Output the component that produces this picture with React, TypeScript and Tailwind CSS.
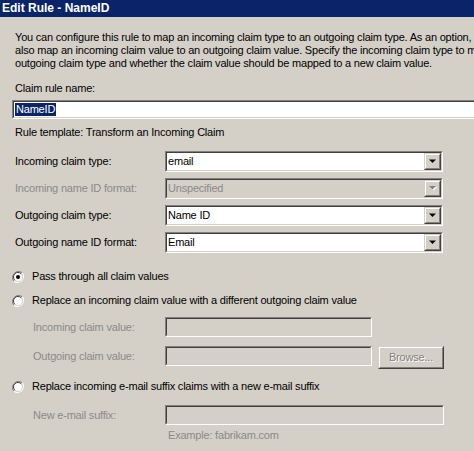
import React from "react";

const FONT = { fontFamily: '"Liberation Sans", Arial, sans-serif' };

function Sunken({ className = "", disabled = false, children }: { className?: string; disabled?: boolean; children?: React.ReactNode }) {
  return (
    <div className={`border border-t-[#808080] border-l-[#808080] border-b-white border-r-white ${className}`}>
      <div className={`h-full w-full border border-t-[#404040] border-l-[#404040] border-b-[#d4d0c8] border-r-[#d4d0c8] ${disabled ? "bg-[#d4d0c8]" : "bg-white"} flex items-center overflow-hidden`}>
        {children}
      </div>
    </div>
  );
}

function Raised({ className = "", children }: { className?: string; children?: React.ReactNode }) {
  return (
    <div className={`border border-t-[#d4d0c8] border-l-[#d4d0c8] border-b-[#404040] border-r-[#404040] bg-[#d4d0c8] ${className}`}>
      <div className="h-full w-full border border-t-white border-l-white border-b-[#808080] border-r-[#808080] flex items-center justify-center">
        {children}
      </div>
    </div>
  );
}

function Select({ value, disabled = false }: { value: string; disabled?: boolean }) {
  return (
    <Sunken className="w-[278px] h-[21px]" disabled={disabled}>
      <span className={`flex-1 pl-[1px] ${disabled ? "text-[#8a8a8a]" : "text-black"}`}>{value}</span>
      <Raised className="w-[17px] h-[17px]">
        <svg width="8" height="5" viewBox="0 0 8 5">
          {disabled ? (
            <>
              <path d="M1 1h7L4.5 4.5z" fill="#ffffff" />
              <path d="M0 0h7L3.5 3.5z" fill="#808080" />
            </>
          ) : (
            <path d="M0 0.5h7L3.5 4z" fill="#000" />
          )}
        </svg>
      </Raised>
    </Sunken>
  );
}

function Radio({ checked = false }: { checked?: boolean }) {
  return (
    <svg width="12" height="12" viewBox="0 0 12 12" className="shrink-0">
      <path d="M10.2 1.8A6 6 0 0 0 1.8 10.2" stroke="#808080" strokeWidth="1" fill="none" />
      <path d="M1.8 10.2A6 6 0 0 0 10.2 1.8" stroke="#ffffff" strokeWidth="1.2" fill="none" />
      <circle cx="6" cy="6" r="4.5" fill="#ffffff" />
      <path d="M9.2 2.8A4.5 4.5 0 0 0 2.8 9.2" stroke="#404040" strokeWidth="1" fill="none" />
      <path d="M2.8 9.2A4.5 4.5 0 0 0 9.2 2.8" stroke="#d4d0c8" strokeWidth="1" fill="none" />
      {checked && <circle cx="6" cy="6" r="2" fill="#000" />}
    </svg>
  );
}

export default function App() {
  const dis = "text-[#8a8a8a]";
  return (
    <div className="w-[474px] h-[451px] overflow-hidden bg-[#d4d0c8] text-[11px] leading-[13px] tracking-[-0.2px] text-black" style={FONT}>
      <div className="h-[17px] bg-[#0a246a] text-white font-bold text-[12px] leading-[17px] tracking-normal pl-[2px]">Edit Rule - NameID</div>

      <div className="pl-[15px] mt-[14px] whitespace-nowrap overflow-hidden">
        <div className="h-[13px]">You can configure this rule to map an incoming claim type to an outgoing claim type. As an option, you can</div>
        <div className="h-[13px]">also map an incoming claim value to an outgoing claim value. Specify the incoming claim type to map to the</div>
        <div className="h-[13px]">outgoing claim type and whether the claim value should be mapped to a new claim value.</div>
      </div>

      <div className="pl-[15px] mt-[12px] h-[13px]">Claim rule name:</div>
      <div className="pl-[12px] mt-[5px]">
        <Sunken className="w-[480px] h-[19px]">
          <span className="ml-[1px] bg-[#0a246a] text-white px-[1px] leading-[13px]">NameID</span>
        </Sunken>
      </div>

      <div className="pl-[15px] mt-[7px] h-[13px]">Rule template: Transform an Incoming Claim</div>

      <div className="mt-[12px] flex flex-col gap-[6px]">
        <div className="flex items-center">
          <div className="w-[165px] pl-[15px]">Incoming claim type:</div>
          <Select value="email" />
        </div>
        <div className="flex items-center">
          <div className={`w-[165px] pl-[15px] ${dis}`}>Incoming name ID format:</div>
          <Select value="Unspecified" disabled />
        </div>
        <div className="flex items-center">
          <div className="w-[165px] pl-[15px]">Outgoing claim type:</div>
          <Select value="Name ID" />
        </div>
        <div className="flex items-center">
          <div className="w-[165px] pl-[15px]">Outgoing name ID format:</div>
          <Select value="Email" />
        </div>
      </div>

      <div className="mt-[17px] pl-[12px] flex items-center gap-[8px] h-[13px]">
        <Radio checked />
        <span>Pass through all claim values</span>
      </div>
      <div className="mt-[11px] pl-[12px] flex items-center gap-[8px] h-[13px]">
        <Radio />
        <span>Replace an incoming claim value with a different outgoing claim value</span>
      </div>

      <div className="mt-[10px] flex items-center">
        <div className={`w-[165px] pl-[33px] ${dis}`}>Incoming claim value:</div>
        <Sunken className="w-[207px] h-[20px]" disabled />
      </div>
      <div className="mt-[9px] flex items-start">
        <div className={`w-[165px] pl-[33px] h-[20px] flex items-center ${dis}`}>Outgoing claim value:</div>
        <Sunken className="w-[207px] h-[20px]" disabled />
        <Raised className="ml-[6px] w-[66px] h-[23px]">
          <span className="text-[#808080] [text-shadow:1px_1px_0_#ffffff]">Browse...</span>
        </Raised>
      </div>

      <div className="mt-[11px] pl-[12px] flex items-center gap-[8px] h-[13px]">
        <Radio />
        <span>Replace incoming e-mail suffix claims with a new e-mail suffix</span>
      </div>
      <div className="mt-[12px] flex items-center">
        <div className={`w-[165px] pl-[33px] ${dis}`}>New e-mail suffix:</div>
        <Sunken className="w-[279px] h-[20px]" disabled />
      </div>
      <div className={`mt-[4px] pl-[168px] h-[13px] ${dis}`}>Example: fabrikam.com</div>
    </div>
  );
}
